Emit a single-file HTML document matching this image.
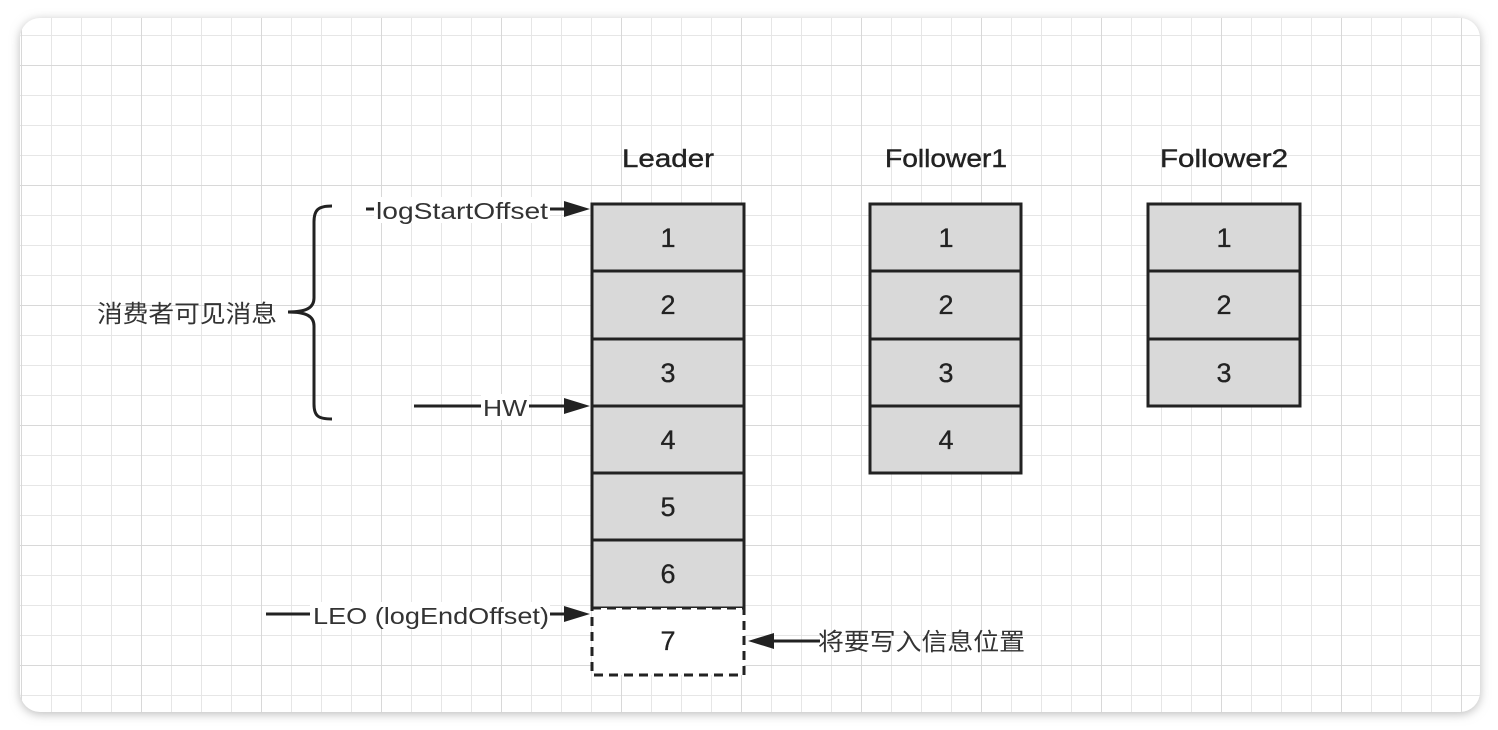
<!DOCTYPE html>
<html><head><meta charset="utf-8"><style>
html,body{margin:0;padding:0;background:#fff;}
body{width:1498px;height:730px;overflow:hidden;}
</style></head><body>
<svg width="1498" height="730" xmlns="http://www.w3.org/2000/svg" style="display:block">
<defs>
<pattern id="mi" x="21" y="5" width="30" height="30" patternUnits="userSpaceOnUse">
<path d="M0 0V30M0 0H30" stroke="#e6e6e6" stroke-width="2" fill="none"/></pattern>
<pattern id="ma" x="21" y="65" width="120" height="120" patternUnits="userSpaceOnUse">
<path d="M0 0V120M0 0H120" stroke="#d8d8d8" stroke-width="2" fill="none"/></pattern>
<filter id="sh" x="-5%" y="-5%" width="110%" height="110%"><feGaussianBlur stdDeviation="5"/></filter>
<clipPath id="cp"><rect x="20" y="18" width="1460" height="694" rx="20"/></clipPath>
</defs>
<rect x="20" y="20" width="1460" height="694" rx="20" fill="#bbb" filter="url(#sh)"/>
<rect x="20" y="18" width="1460" height="694" rx="20" fill="#fff"/>
<g clip-path="url(#cp)">
<rect x="20" y="18" width="1460" height="694" fill="url(#mi)"/>
<rect x="20" y="18" width="1460" height="694" fill="url(#ma)"/>
</g>
<g font-family="Liberation Sans, sans-serif" fill="#222" font-size="25" stroke="#222" stroke-width="0.4" lengthAdjust="spacingAndGlyphs">
<text x="622" y="167" textLength="92" lengthAdjust="spacingAndGlyphs">Leader</text>
<text x="885" y="167" textLength="122" lengthAdjust="spacingAndGlyphs">Follower1</text>
<text x="1160" y="167" textLength="128" lengthAdjust="spacingAndGlyphs">Follower2</text>
</g>
<g stroke="#222" stroke-width="3" fill="#d9d9d9">
<rect x="592" y="204" width="152" height="404"/>
<line x1="592" y1="271" x2="744" y2="271"/><line x1="592" y1="339" x2="744" y2="339"/>
<line x1="592" y1="406" x2="744" y2="406"/><line x1="592" y1="473" x2="744" y2="473"/>
<line x1="592" y1="540" x2="744" y2="540"/>
<rect x="870" y="204" width="151" height="269"/>
<line x1="870" y1="271" x2="1021" y2="271"/><line x1="870" y1="339" x2="1021" y2="339"/><line x1="870" y1="406" x2="1021" y2="406"/>
<rect x="1148" y="204" width="152" height="202"/>
<line x1="1148" y1="271" x2="1300" y2="271"/><line x1="1148" y1="339" x2="1300" y2="339"/>
<rect x="592" y="608" width="152" height="67" fill="#fff" stroke-dasharray="9,6"/>
</g>
<g font-family="Liberation Sans, sans-serif" fill="#222" font-size="27" text-anchor="middle" stroke="#222" stroke-width="0.3">
<text x="668" y="247">1</text><text x="668" y="314">2</text><text x="668" y="382">3</text>
<text x="668" y="449">4</text><text x="668" y="516">5</text><text x="668" y="583">6</text><text x="668" y="650">7</text>
<text x="946" y="247">1</text><text x="946" y="314">2</text><text x="946" y="382">3</text><text x="946" y="449">4</text>
<text x="1224" y="247">1</text><text x="1224" y="314">2</text><text x="1224" y="382">3</text>
</g>
<path d="M332 206 C318 206 314 210 314 222 V298 C314 308 306 312 288 312 C306 312 314 316 314 326 V404 C314 416 318 419 332 419" stroke="#222" stroke-width="3" fill="none"/>
<g stroke="#222" stroke-width="3">
<line x1="366" y1="209" x2="570" y2="209"/>
<line x1="414" y1="406" x2="570" y2="406"/>
<line x1="266" y1="614" x2="570" y2="614"/>
<line x1="768" y1="641" x2="820" y2="641"/>
</g>
<g fill="#222">
<polygon points="590,209 564,201 564,217"/>
<polygon points="590,406 564,398 564,414"/>
<polygon points="590,614 564,606 564,622"/>
<polygon points="748,641 774,633 774,649"/>
</g>
<g font-family="Liberation Sans, sans-serif" fill="#333" font-size="23">
<rect x="374" y="197" width="176" height="26" fill="#fff"/>
<text x="376" y="219" textLength="172" lengthAdjust="spacingAndGlyphs">logStartOffset</text>
<rect x="481" y="394" width="48" height="26" fill="#fff"/>
<text x="483" y="416" textLength="44" lengthAdjust="spacingAndGlyphs">HW</text>
<rect x="310" y="602" width="240" height="26" fill="#fff"/>
<text x="313" y="624" textLength="236" lengthAdjust="spacingAndGlyphs">LEO (logEndOffset)</text>
</g>
<g font-family="Liberation Sans, 'Noto Sans CJK SC', sans-serif" fill="#333" font-size="24">
<text x="97" y="322" textLength="180" lengthAdjust="spacingAndGlyphs">消费者可见消息</text>
<text x="818" y="650" textLength="207" lengthAdjust="spacingAndGlyphs">将要写入信息位置</text>
</g>
</svg>
</body></html>
